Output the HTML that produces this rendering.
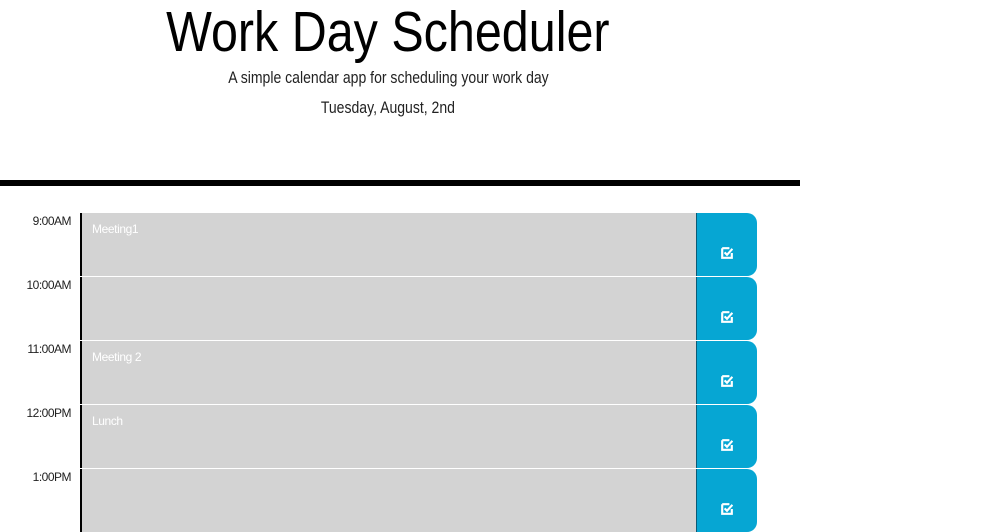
<!DOCTYPE html>
<html><head><style>
body{margin:0;width:990px;height:532px;overflow:hidden;background:#fff;font-family:"Liberation Sans",sans-serif;position:relative}
.t{position:absolute;left:0;width:776px;text-align:center;white-space:nowrap}
.t span{display:inline-block;transform:scaleX(.85)}
.bar{position:absolute;left:0;top:180px;width:800px;height:6px;background:#000}
.row{position:absolute;left:0;width:760px;height:63px}
.hr{position:absolute;left:0;width:71px;text-align:right;top:1px;font-size:12px;color:#222;letter-spacing:-.5px}
.ta{position:absolute;left:80px;width:614px;height:63px;background:#d3d3d3;border-left:2px solid #000}
.ta span{position:absolute;left:10px;top:9px;color:#fff;font-size:12px;letter-spacing:-.4px}
.bt{position:absolute;left:696px;width:61px;height:63px;background:#06a6d3;border-radius:0 10px 10px 0;border-left:1px solid #0a5a75;box-sizing:border-box}
.bt svg{position:absolute;left:24px;top:34px}
</style></head><body>
<div class="t" style="top:0px;font-size:57px;line-height:64px;color:#000"><span>Work Day Scheduler</span></div>
<div class="t" style="top:68px;font-size:16.5px;line-height:20px;color:#222"><span>A simple calendar app for scheduling your work day</span></div>
<div class="t" style="top:98px;font-size:16.5px;line-height:20px;color:#222"><span>Tuesday, August, 2nd</span></div>
<div class="bar"></div>
<div class="row" style="top:213px"><div class="hr">9:00AM</div><div class="ta"><span>Meeting1</span></div><div class="bt"><svg width="12" height="12" viewBox="0 0 10 10"><path d="M1 1h6M1 1v8h8V5" stroke="#fff" stroke-width="1.8" fill="none"/><path d="M3 4.5l2 2L9.5 1.5" stroke="#fff" stroke-width="1.8" fill="none"/></svg></div></div>
<div class="row" style="top:277px"><div class="hr">10:00AM</div><div class="ta"></div><div class="bt"><svg width="12" height="12" viewBox="0 0 10 10"><path d="M1 1h6M1 1v8h8V5" stroke="#fff" stroke-width="1.8" fill="none"/><path d="M3 4.5l2 2L9.5 1.5" stroke="#fff" stroke-width="1.8" fill="none"/></svg></div></div>
<div class="row" style="top:341px"><div class="hr">11:00AM</div><div class="ta"><span>Meeting 2</span></div><div class="bt"><svg width="12" height="12" viewBox="0 0 10 10"><path d="M1 1h6M1 1v8h8V5" stroke="#fff" stroke-width="1.8" fill="none"/><path d="M3 4.5l2 2L9.5 1.5" stroke="#fff" stroke-width="1.8" fill="none"/></svg></div></div>
<div class="row" style="top:405px"><div class="hr">12:00PM</div><div class="ta"><span>Lunch</span></div><div class="bt"><svg width="12" height="12" viewBox="0 0 10 10"><path d="M1 1h6M1 1v8h8V5" stroke="#fff" stroke-width="1.8" fill="none"/><path d="M3 4.5l2 2L9.5 1.5" stroke="#fff" stroke-width="1.8" fill="none"/></svg></div></div>
<div class="row" style="top:469px"><div class="hr">1:00PM</div><div class="ta"></div><div class="bt"><svg width="12" height="12" viewBox="0 0 10 10"><path d="M1 1h6M1 1v8h8V5" stroke="#fff" stroke-width="1.8" fill="none"/><path d="M3 4.5l2 2L9.5 1.5" stroke="#fff" stroke-width="1.8" fill="none"/></svg></div></div>
</body></html>
